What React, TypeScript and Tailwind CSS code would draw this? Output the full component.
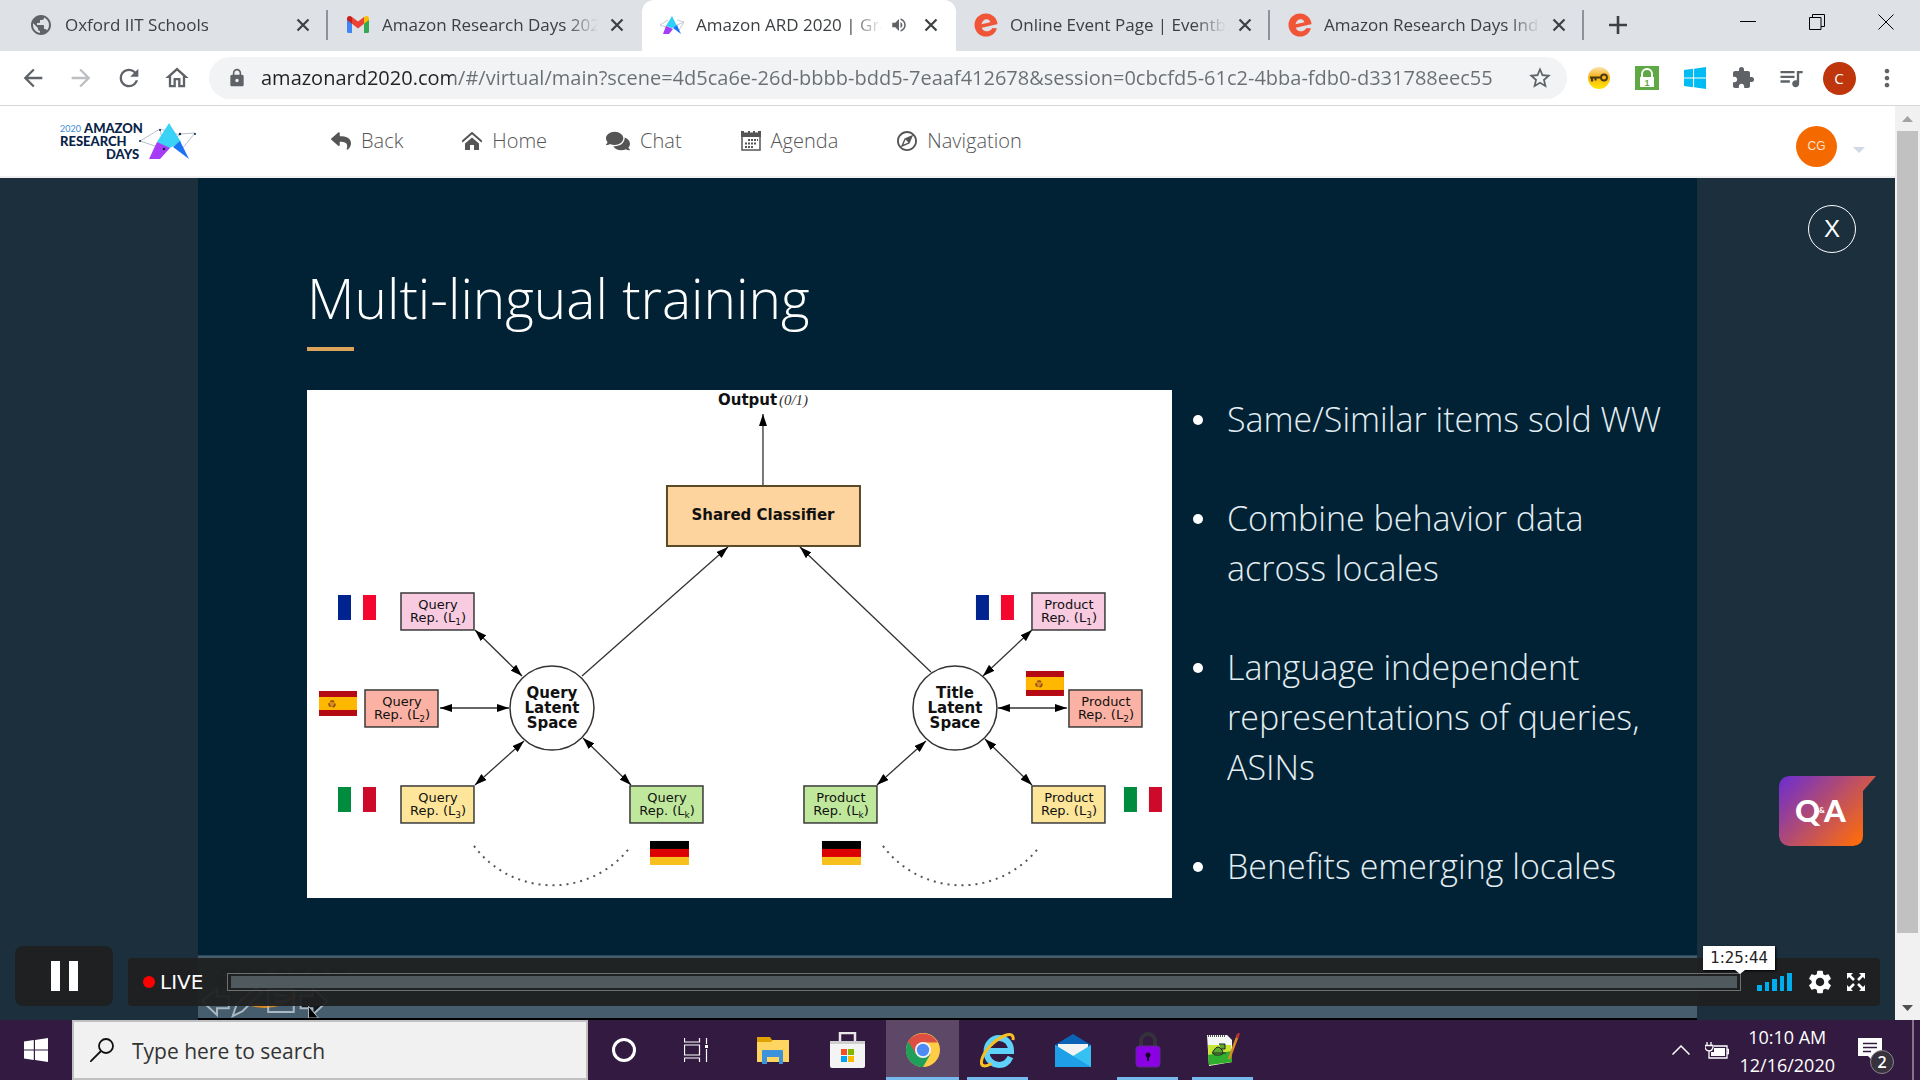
import React from "react";
import {
  MdArrowBack,
  MdArrowForward,
  MdExtension,
  MdLock,
  MdMoreVert,
  MdOutlineHome,
  MdQueueMusic,
  MdRefresh,
  MdSettings,
  MdStarBorder,
  MdVolumeUp,
  MdPublic,
} from "react-icons/md";
import { FaComments, FaReply } from "react-icons/fa";
import { ImCompass2 } from "react-icons/im";

/* ---------- small icons ---------- */

function CloseX() {
  return (
    <svg viewBox="0 0 14 14" className="size-3.5" fill="none" stroke="#3c4043" strokeWidth="2.2">
      <path d="M1.5 1.5l11 11M12.5 1.5l-11 11" />
    </svg>
  );
}

function GmailIcon() {
  return (
    <svg viewBox="0 0 22 17" className="w-[22px] h-[17px]">
      <path d="M0 3v12.5A1.5 1.5 0 0 0 1.500 17H5V6z" fill="#4285f4" />
      <path d="M17 6v11h3.500a1.500 1.500 0 0 0 1.500-1.500V3z" fill="#34a853" />
      <path d="M17 1v6.800l5-3.800V2.500C22 .4 19.700-.6 18 .6z" fill="#fbbc04" />
      <path d="M5 7.800V1l6 4.600L17 1v6.800l-6 4.600z" fill="#ea4335" />
      <path d="M0 2.500V4l5 3.800V1L4 .5C2.300-.6 0 .4 0 2.500z" fill="#c5221f" />
    </svg>
  );
}

function ArdIcon() {
  return (
    <svg viewBox="0 0 24 18" className="w-6 h-[18px]">
      <path d="M0 9l8-5M0 9l9 3M24 6l-7-2M24 6l-5 8M10 12l14-6" stroke="#b9bcc6" strokeWidth=".8" fill="none" />
      <path d="M12 0l-6 10 6 2 5-2z" fill="#2fd0f7" />
      <path d="M6 10L3 18h6l4-5z" fill="#a63cf5" />
      <path d="M17 9l4 9-8-6z" fill="#1a73f5" />
    </svg>
  );
}

function EventbriteIcon() {
  return (
    <svg viewBox="0 0 24 24" className="size-6">
      <ellipse cx="12" cy="12" rx="11.500" ry="11.500" fill="#f05537" />
      <path d="M7.500 11.300C8 8 10.400 6 12.800 6.200c2 .2 3.200 1.500 3.600 3z" fill="#dee1e6" />
      <path d="M7.800 14.700L24 11v4.500l-5.500-.6C16.800 17.800 13.500 18.900 11 18.100 9.300 17.500 8.200 16.300 7.800 14.700z" fill="#dee1e6" />
    </svg>
  );
}

function WindowsLogo({ className }: { className: string }) {
  return (
    <svg viewBox="0 0 24 24" className={className} fill="currentColor">
      <path d="M0 3.400L9.800 2v9.400H0zM11 1.900L24 0v11.400H11zM0 12.600h9.800V22L0 20.600zM11 12.600h13V24l-13-1.900z" />
    </svg>
  );
}

function ArdLogo() {
  return (
    <svg viewBox="0 0 136 38" className="w-[136px] h-[38px]" role="img" aria-label="2020 Amazon Research Days">
      <g fontFamily="Lato, sans-serif" fontWeight="900" fill="#0a2348">
        <text x="0" y="10" fontSize="9" fontWeight="400" fill="#3b8ad8">2020</text>
        <text x="24" y="11" fontSize="13">AMAZON</text>
        <text x="0" y="24" fontSize="13">RESEARCH</text>
        <text x="46" y="37" fontSize="13">DAYS</text>
      </g>
      <g stroke="#9aa3b5" strokeWidth=".7" fill="none">
        <path d="M80 19l20-12M80 19l24 8M100 7l20 6M135 11l-15 1M135 11l-14 17M104 27l16-15M100 7l4 20" />
      </g>
      <path d="M109 1L97 20l11 7 13-7z" fill="#2fd0f7" opacity=".95" />
      <path d="M97 20l-8 17h11l10-11z" fill="#a63cf5" />
      <path d="M120 19l9 18-16-12z" fill="#1a73f5" />
      <g fill="#0a2348">
        <circle cx="80" cy="19" r="1" /><circle cx="100" cy="8" r="1" /><circle cx="104" cy="27" r="1.200" /><circle cx="120" cy="12" r="1.200" /><circle cx="135" cy="12" r="1" />
      </g>
    </svg>
  );
}

/* ---------- browser chrome ---------- */

type TabProps = { title: string; icon: React.ReactNode; active?: boolean; audio?: boolean; sep?: boolean; first?: boolean };

function Tab({ title, icon, active, audio, sep, first }: TabProps) {
  return (
    <div
      role="tab"
      aria-selected={!!active}
      className={
        "flex min-w-0 items-center h-full pb-0.5 " +
        (first ? "w-[328px] pl-[29px] " : "w-[314px] pl-[18px] ") +
        (active ? "bg-white rounded-t-xl" : "")
      }
    >
      <span className="flex w-6 shrink-0 justify-center">{icon}</span>
      <span className="ml-3 flex-1 overflow-hidden whitespace-nowrap text-[17px] leading-6 text-[#3c4043] [mask-image:linear-gradient(90deg,#000_calc(100%-32px),transparent)]">
        {title}
      </span>
      {audio && <MdVolumeUp className="ml-2 size-[18px] shrink-0 text-[#5f6368]" aria-label="Playing audio" />}
      <button aria-label={"Close " + title} className={(audio ? "ml-4" : "ml-3") + " mr-4 shrink-0"}>
        <CloseX />
      </button>
      <span className={"h-[30px] w-0.5 shrink-0 " + (sep ? "bg-[#8f9399]" : "bg-transparent")} />
    </div>
  );
}

function TabStrip() {
  return (
    <div className="flex h-[51px] shrink-0 bg-[#dee1e6]">
      <div role="tablist" className="flex min-w-0">
        <Tab first sep title="Oxford IIT Schools" icon={<MdPublic className="size-[26px] text-[#5f6368]" />} />
        <Tab title="Amazon Research Days 202" icon={<GmailIcon />} />
        <Tab active audio title="Amazon ARD 2020 | Gra" icon={<ArdIcon />} />
        <Tab sep title="Online Event Page | Eventbr" icon={<EventbriteIcon />} />
        <Tab sep title="Amazon Research Days Indi" icon={<EventbriteIcon />} />
      </div>
      <button aria-label="New tab" className="ml-5 w-7 shrink-0 pb-0.5">
        <svg viewBox="0 0 18 18" className="mx-auto size-[18px]" stroke="#3c4043" strokeWidth="2.600">
          <path d="M9 0v18M0 9h18" />
        </svg>
      </button>
      <div className="ml-auto flex shrink-0 pb-2">
        <button aria-label="Minimize" className="w-[69px]">
          <svg viewBox="0 0 16 16" className="mx-auto size-4" stroke="#000"><path d="M0 7.500h16" /></svg>
        </button>
        <button aria-label="Restore" className="w-[69px]">
          <svg viewBox="0 0 16 16" className="mx-auto size-4" fill="none" stroke="#000">
            <path d="M.5 3.500h11.500v12H.5zM3.500 3.500V.5h12v12H12" />
          </svg>
        </button>
        <button aria-label="Close window" className="w-[69px]">
          <svg viewBox="0 0 16 16" className="mx-auto size-4" stroke="#000"><path d="M.5.5l15 15M15.500.5l-15 15" /></svg>
        </button>
      </div>
    </div>
  );
}

const URL_TEXT =
  "amazonard2020.com/#/virtual/main?scene=4d5ca6e-26d-bbbb-bdd5-7eaaf412678&session=0cbcfd5-61c2-4bba-fdb0-d331788eec55";

function AddressBar() {
  const side = "flex w-12 shrink-0 items-center justify-center";
  return (
    <div className="flex h-[55px] shrink-0 items-center border-b border-[#d5d7da] bg-white pl-[9px] pr-[9px] text-[#5f6368]">
      <button aria-label="Back" className={side}><MdArrowBack className="size-7" /></button>
      <button aria-label="Forward" className={side + " text-[#bcbec1]"}><MdArrowForward className="size-7" /></button>
      <button aria-label="Reload" className={side}><MdRefresh className="size-7" /></button>
      <button aria-label="Home" className={side}><MdOutlineHome className="size-7" /></button>
      <div className="ml-2 flex h-[42px] flex-1 items-center rounded-full bg-[#f1f3f4] pl-[18px]">
        <MdLock className="size-5 shrink-0" />
        <input
          aria-label="Address"
          defaultValue={URL_TEXT}
          className="ml-3.5 min-w-0 flex-1 bg-[linear-gradient(90deg,#202124_0_193px,#6a6e73_193px)] bg-clip-text text-[20px] text-transparent outline-none"
        />
        <button aria-label="Bookmark" className="flex w-[54px] shrink-0 justify-center"><MdStarBorder className="size-[26px]" /></button>
      </div>
      <div className="ml-2 flex shrink-0">
        <button aria-label="Password key" className={side}>
          <svg viewBox="0 0 22 22" className="size-[22px]">
            <defs>
              <linearGradient id="keyg" x1="0" y1="0" x2="0" y2="1">
                <stop offset="0" stopColor="#fbe3a8" /><stop offset=".45" stopColor="#f8b219" /><stop offset="1" stopColor="#ffe600" />
              </linearGradient>
            </defs>
            <circle cx="11" cy="11" r="11" fill="url(#keyg)" />
            <circle cx="16" cy="10.500" r="3" fill="none" stroke="#4a3a10" strokeWidth="1.800" />
            <path d="M2 10.500h11M4 10.500v4M7.500 10.500v3" stroke="#4a3a10" strokeWidth="2.200" />
          </svg>
        </button>
        <button aria-label="Secure login" className={side}>
          <svg viewBox="0 0 24 24" className="size-6">
            <path d="M0 0h24v24H0z" fill="#5fa944" />
            <path d="M7 11V8a5 5 0 0 1 10 0v3" fill="none" stroke="#fff" strokeWidth="2" />
            <path d="M5 11h14v10H5z" fill="#fff" />
            <text x="12" y="19.500" fontSize="9" fontWeight="700" textAnchor="middle" fill="#5fa944" fontFamily="Liberation Sans, sans-serif">1</text>
          </svg>
        </button>
        <button aria-label="Windows" className={side}><WindowsLogo className="size-[22px] text-[#00bcf2]" /></button>
        <button aria-label="Extensions" className={side}><MdExtension className="size-6" /></button>
        <button aria-label="Media" className={side}><MdQueueMusic className="size-7" /></button>
        <button aria-label="Profile" className={side}>
          <span className="flex size-[33px] items-center justify-center rounded-full bg-[#bf360c] text-[15px] leading-5 text-white">C</span>
        </button>
        <button aria-label="Menu" className={side}><MdMoreVert className="size-7" /></button>
      </div>
    </div>
  );
}

/* ---------- event site header ---------- */

function HomeIcon() {
  return (
    <svg viewBox="0 0 20 18" className="w-5 h-[18px]" fill="#555">
      <path d="M10 5.500l7 6V18h-5v-5H8v5H3v-6.500z" />
      <path d="M0 9.800L10 1l10 8.800" fill="none" stroke="#555" strokeWidth="2" />
    </svg>
  );
}

function AgendaIcon() {
  return (
    <svg viewBox="0 0 20 20" className="size-5" fill="#555">
      <path d="M0 0h3v1.500h4V0h2v1.500h3V0h2v1.500h3V0h3v6H0z" />
      <path d="M1 5v14h18V5" fill="none" stroke="#555" strokeWidth="1.500" />
      <path d="M7 8h2v2H7zM10 8h2v2h-2zM13 8h2v2h-2zM16 8h1v2h-1zM4 11.500h2v2H4zM7 11.500h2v2H7zM10 11.500h2v2h-2zM13 11.500h2v2h-2zM4 15h2v2H4zM7 15h2v2H7zM10 15h2v2h-2z" />
    </svg>
  );
}

function SiteHeader() {
  const link = "flex items-center gap-2.5";
  return (
    <header className="flex h-[72px] shrink-0 items-center border-b-2 border-[#f0f0f0] bg-white pl-[60px] pr-[30px] text-[#555]">
      <a href="#home" className="shrink-0"><ArdLogo /></a>
      <nav className="ml-[135px] flex gap-[59px] text-[20px] leading-7 font-light">
        <a href="#back" className={link}><FaReply className="size-5" />Back</a>
        <a href="#lobby" className={link}><HomeIcon />Home</a>
        <a href="#chat" className={link}><FaComments className="size-6" />Chat</a>
        <a href="#agenda" className={link}><AgendaIcon />Agenda</a>
        <a href="#navigation" className={link}><ImCompass2 className="size-5" />Navigation</a>
      </nav>
      <button aria-label="Account" className="ml-auto mt-2.5 flex items-center gap-4">
        <span className="flex size-[41px] items-center justify-center rounded-full bg-[#f56a00] font-['Liberation_Sans'] text-[12px] text-[#fde3cf]">CG</span>
        <svg viewBox="0 0 12 6" className="mt-2 w-3 h-1.5"><path d="M0 0h12L6 6z" fill="#d1d8e6" /></svg>
      </button>
    </header>
  );
}

/* ---------- slide ---------- */

type Pt = [number, number];

function Arrow({ from, to, both }: { from: Pt; to: Pt; both?: boolean }) {
  return (
    <line
      x1={from[0]} y1={from[1]} x2={to[0]} y2={to[1]}
      stroke="#333" strokeWidth="1.300" markerEnd="url(#tip)" markerStart={both ? "url(#tip)" : undefined}
    />
  );
}

function Rep({ x, y, label, sub, fill }: { x: number; y: number; label: string; sub: string; fill: string }) {
  return (
    <g>
      <rect x={x} y={y} width="73" height="37" fill={fill} stroke="#3a3a3a" strokeWidth="1.500" />
      <text x={x + 37} y={y + 16} textAnchor="middle" fontSize="13">{label}</text>
      <text x={x + 37} y={y + 29} textAnchor="middle" fontSize="13">
        Rep. (L<tspan fontSize="9" dy="3">{sub}</tspan><tspan dy="-3">)</tspan>
      </text>
    </g>
  );
}

function Latent({ cx, lines }: { cx: number; lines: string[] }) {
  return (
    <g>
      <circle cx={cx} cy="318" r="42" fill="#fff" stroke="#333" strokeWidth="1.500" />
      {lines.map((t, i) => (
        <text key={t} x={cx} y={308 + i * 15} textAnchor="middle" fontSize="15" fontWeight="700">{t}</text>
      ))}
    </g>
  );
}

function TwoBars({ x, y, a, b }: { x: number; y: number; a: string; b: string }) {
  return (
    <g>
      <rect x={x} y={y} width="13" height="25" fill={a} />
      <rect x={x + 25} y={y} width="13" height="25" fill={b} />
    </g>
  );
}

function Spain({ x, y }: { x: number; y: number }) {
  return (
    <g>
      <rect x={x} y={y} width="38" height="25" fill="#b50a14" />
      <rect x={x} y={y + 6} width="38" height="13" fill="#ffb700" />
      <circle cx={x + 13} cy={y + 13} r="3" fill="#d98c1c" stroke="#8a4b14" strokeWidth="1.500" strokeDasharray="4 2" />
    </g>
  );
}

function Germany({ x, y }: { x: number; y: number }) {
  return (
    <g>
      <rect x={x} y={y} width="39" height="8" fill="#000" />
      <rect x={x} y={y + 8} width="39" height="8" fill="#dd0000" />
      <rect x={x} y={y + 16} width="39" height="8" fill="#f8c01c" />
    </g>
  );
}

function Diagram() {
  return (
    <svg viewBox="0 0 865 508" className="w-full bg-white" fontFamily="DejaVu Sans, sans-serif" fill="#111" role="img" aria-label="Shared classifier diagram">
      <defs>
        <marker id="tip" viewBox="0 0 12 8" refX="12" refY="4" markerWidth="12" markerHeight="8" markerUnits="userSpaceOnUse" orient="auto-start-reverse">
          <path d="M0 0l12 4-12 4z" fill="#000" />
        </marker>
      </defs>
      <text x="411" y="15" fontSize="15" fontWeight="700">Output</text>
      <text x="472" y="15" fontSize="15" fontStyle="italic" fontFamily="Liberation Serif, serif" fill="#333">(0/1)</text>
      <Arrow from={[456, 96]} to={[456, 24]} />
      <rect x="360" y="96" width="193" height="60" fill="#fdd49e" stroke="#5a4a2a" strokeWidth="2" />
      <text x="456" y="130" fontSize="15" fontWeight="700" textAnchor="middle">Shared Classifier</text>
      <Arrow from={[275, 286]} to={[421, 157]} />
      <Arrow from={[624, 282]} to={[493, 157]} />

      <Latent cx={245} lines={["Query", "Latent", "Space"]} />
      <Arrow both from={[168, 240]} to={[215, 286]} />
      <Arrow both from={[133, 318]} to={[202, 318]} />
      <Arrow both from={[168, 395]} to={[217, 351]} />
      <Arrow both from={[276, 348]} to={[324, 395]} />
      <Rep x={94} y={203} label="Query" sub="1" fill="#f8cbe0" />
      <Rep x={58} y={300} label="Query" sub="2" fill="#fbb1a3" />
      <Rep x={94} y={396} label="Query" sub="3" fill="#fde69a" />
      <Rep x={323} y={396} label="Query" sub="k" fill="#c0e89c" />
      <TwoBars x={31} y={205} a="#00248f" b="#f5062e" />
      <Spain x={12} y={301} />
      <TwoBars x={31} y={397} a="#008c3e" b="#ce0a2a" />
      <Germany x={343} y={451} />

      <Latent cx={648} lines={["Title", "Latent", "Space"]} />
      <Arrow both from={[725, 240]} to={[676, 286]} />
      <Arrow both from={[691, 318]} to={[760, 318]} />
      <Arrow both from={[678, 349]} to={[725, 395]} />
      <Arrow both from={[570, 395]} to={[619, 351]} />
      <Rep x={725} y={203} label="Product" sub="1" fill="#f8cbe0" />
      <Rep x={762} y={300} label="Product" sub="2" fill="#fbb1a3" />
      <Rep x={725} y={396} label="Product" sub="3" fill="#fde69a" />
      <Rep x={497} y={396} label="Product" sub="k" fill="#c0e89c" />
      <TwoBars x={669} y={205} a="#00248f" b="#f5062e" />
      <Spain x={719} y={281} />
      <TwoBars x={817} y={397} a="#008c3e" b="#ce0a2a" />
      <Germany x={515} y={451} />

      <g fill="none" stroke="#555" strokeWidth="2" strokeDasharray="2 5">
        <path d="M167 456A98 98 0 0 0 324 456" />
        <path d="M576 456A98 98 0 0 0 733 456" />
      </g>
    </svg>
  );
}

const POINTS = [
  ["Same/Similar items sold WW"],
  ["Combine behavior data", "across locales"],
  ["Language independent", "representations of queries,", "ASINs"],
  ["Benefits emerging locales"],
];

function Slide() {
  return (
    <section className="relative flex w-[79.1%] flex-col bg-[#002234] pl-[109px] pt-[90px] text-white">
      <h1 className="text-[55px] leading-[60px] font-light">Multi-lingual training</h1>
      <div className="mt-[19px] h-1 w-[47px] bg-[#dba45a]" />
      <div className="mt-[39px] grid grid-cols-[865fr_504fr] items-start gap-[21px]">
        <Diagram />
        <ul className="pt-1 text-[34px] leading-[50px] font-light text-[#e3edf2]">
          {POINTS.map((lines) => (
            <li key={lines[0]} className="mb-[49px] flex">
              <span className="mt-[21px] mr-6 size-2.5 shrink-0 rounded-full bg-white" />
              <span className="whitespace-nowrap">
                {lines.map((l) => (
                  <span key={l} className="block">{l}</span>
                ))}
              </span>
            </li>
          ))}
        </ul>
      </div>
      <div className="absolute inset-x-0 bottom-0 h-[65px] border-t border-b-2 border-t-[#2d4658] border-b-black bg-[#455d6d]">
        <svg viewBox="0 0 160 63" className="h-[62px] w-40" fill="none" stroke="#a9b8c2" strokeWidth="2">
          <text x="18" y="32" fontSize="34" fontWeight="700" fill="#1c2a35" stroke="none" fontFamily="Open Sans, sans-serif">amazon</text>
          <path d="M42 43c12 10 38 12 56-4" stroke="#d98a1c" strokeWidth="4" />
          <path d="M3 46l15-13v8h12v12H18v7z" />
          <path d="M34 61l4-12 20-17 5 5-19 19z" fill="#3c4f5c" />
          <path d="M70 34h26v23H70zM76 40h14M76 46h14" />
          <path d="M130 46l-15-13v8h-12v12h12v7z" fill="#10181e" />
          <path d="M111 51v12h10z" fill="#000" strokeWidth="1" />
        </svg>
      </div>
    </section>
  );
}

/* ---------- player controls ---------- */

function PlayerControls() {
  return (
    <div className="absolute inset-x-[15px] bottom-3.5 flex items-end gap-[15px]">
      <button aria-label="Pause" className="flex h-[60px] w-[98px] shrink-0 items-center justify-center gap-[9px] rounded-lg bg-[#1f2021]/95">
        <span className="h-[30px] w-[9px] bg-white" />
        <span className="h-[30px] w-[9px] bg-white" />
      </button>
      <div className="flex h-12 flex-1 items-center rounded bg-[#1f2021]/95 pl-[15px] pr-[15px]">
        <span className="size-3 rounded-full bg-[#ff0000]" />
        <span className="ml-[5px] font-['DejaVu_Sans'] text-[20px] leading-6 text-white">LIVE</span>
        <div className="relative ml-6 flex flex-1">
          <input
            type="range"
            aria-label="Seek"
            defaultValue={100}
            className="h-[18px] w-full appearance-none border border-[#6c6f70] bg-[#505a5e] bg-clip-content px-[3px] py-0.5 [&::-webkit-slider-thumb]:w-0 [&::-webkit-slider-thumb]:appearance-none"
          />
          <div className="absolute -right-[34px] bottom-[21px] bg-white px-[7px] text-[#222] shadow-[1px_1px_2px_#000]">
            <span className="block font-['DejaVu_Sans'] text-[15px] leading-6">1:25:44</span>
            <svg viewBox="0 0 10 4" className="absolute left-8 top-full w-2.5 h-1"><path d="M0 0h10L5 4z" fill="#fff" /></svg>
          </div>
        </div>
        <button aria-label="Volume" className="ml-4 flex h-[18px] items-end gap-[3px]">
          <span className="h-1.5 w-[5px] bg-[#00adef]" />
          <span className="h-[9px] w-[4px] bg-[#00adef]" />
          <span className="h-3 w-[5px] bg-[#00adef]" />
          <span className="h-[15px] w-[4px] bg-[#00adef]" />
          <span className="h-[18px] w-[5px] bg-[#00adef]" />
        </button>
        <button aria-label="Settings" className="ml-3.5"><MdSettings className="size-7 text-white" /></button>
        <button aria-label="Full screen" className="ml-[13px]">
          <svg viewBox="0 0 18 18" className="size-[18px]" fill="#fff" stroke="#fff" strokeWidth="2.500">
            <path d="M2 2l5 5M16 2l-5 5M2 16l5-5M16 16l-5-5" />
            <path d="M0 0h6L0 6zM18 0v6l-6-6zM0 18v-6l6 6zM18 18h-6l6-6z" stroke="none" />
          </svg>
        </button>
      </div>
    </div>
  );
}

function Stage() {
  return (
    <main className="relative flex min-h-0 flex-1 justify-center bg-[#1c2f3d]">
      <Slide />
      <button aria-label="Close session" className="absolute right-[39px] top-[27px] flex size-12 items-center justify-center rounded-full border border-white text-white">
        <span className="font-['Liberation_Sans'] text-[24px] leading-none">X</span>
      </button>
      <button aria-label="Questions and answers" className="absolute bottom-[174px] right-[19px]">
        <svg viewBox="0 0 97 70" className="h-[70px] w-[97px]">
          <defs>
            <linearGradient id="qa" gradientUnits="userSpaceOnUse" x1="8" y1="0" x2="80" y2="68">
              <stop offset="0" stopColor="#7230c8" /><stop offset="1" stopColor="#ff6c0a" />
            </linearGradient>
          </defs>
          <path d="M10 0h87L84 15v45q0 9-10 10H10q-9-1-10-10V10Q1 1 10 0z" fill="url(#qa)" />
          <g fontFamily="Lato, sans-serif" fontWeight="900" fill="#fff">
            <text x="16" y="46" fontSize="31">Q</text>
            <text x="40" y="37" fontSize="8">&amp;</text>
            <text x="45" y="46" fontSize="31">A</text>
          </g>
        </svg>
      </button>
      <PlayerControls />
    </main>
  );
}

function Scrollbar() {
  return (
    <div className="flex w-[25px] shrink-0 flex-col items-center bg-[#f1f1f1]">
      <svg viewBox="0 0 25 25" className="size-[25px] shrink-0"><path d="M7 16h11l-5.500-6z" fill="#a3a3a3" /></svg>
      <div className="w-[21px] flex-[802] bg-[#c1c1c1]" />
      <div className="flex-[62]" />
      <svg viewBox="0 0 25 25" className="size-[25px] shrink-0"><path d="M7 10h11l-5.500 6z" fill="#505050" /></svg>
    </div>
  );
}

/* ---------- taskbar ---------- */

function ExplorerIcon() {
  return (
    <svg viewBox="0 0 32 27" className="w-8 h-[27px]">
      <path d="M0 0h13l2 3h17v22H0z" fill="#e0a200" />
      <path d="M0 5h14l2-2h16v22H0z" fill="#ffd461" />
      <path d="M5 14q0-1 1-1h19q1 0 1 1v13h-4v-7H10v7H5z" fill="#3d92dc" />
    </svg>
  );
}

function StoreIcon() {
  return (
    <svg viewBox="0 0 35 36" className="w-[35px] h-9">
      <path d="M10 10V1h15v9" fill="none" stroke="#e8e8e8" strokeWidth="2.500" />
      <path d="M0 9h35v25q0 2-2 2H2q-2 0-2-2z" fill="#f4f4f4" />
      <path d="M0 9h35v3H0z" fill="#cfcfcf" />
      <path d="M11 17h6v6h-6z" fill="#f25022" /><path d="M18 17h6v6h-6z" fill="#7fba00" />
      <path d="M11 24h6v6h-6z" fill="#00a4ef" /><path d="M18 24h6v6h-6z" fill="#ffb900" />
    </svg>
  );
}

function ChromeIcon() {
  return (
    <svg viewBox="0 0 34 34" className="size-[34px]">
      <circle cx="17" cy="17" r="17" fill="#ffcd46" />
      <path d="M17 17L2.300 8.500A17 17 0 0 0 17 34l7.400-12.700z" fill="#1ea05a" />
      <path d="M17 9.500h14.700A17 17 0 0 0 2.300 8.500L10 21z" fill="#dd4f43" />
      <circle cx="17" cy="17" r="8" fill="#f4f4f4" />
      <circle cx="17" cy="17" r="6.200" fill="#4c8bf5" />
    </svg>
  );
}

function IeIcon() {
  return (
    <svg viewBox="0 0 36 36" className="size-9" fill="none">
      <path d="M6 19h25C31 11 26 6 19 6S6.500 12 6.500 19.500 12 33 19 33c5 0 9-2.500 11.500-8" stroke="#5fd2fa" strokeWidth="6" />
      <path d="M33 8C34 3 31 1 25 3.500 14 8 3 20 1.500 29c-.8 6 4 6 10 2.500" stroke="#f6bf26" strokeWidth="3" />
    </svg>
  );
}

function MailIcon() {
  return (
    <svg viewBox="0 0 36 33" className="w-9 h-[33px]">
      <path d="M0 11L18 0l18 11v3H0z" fill="#0a63b5" />
      <path d="M3 10h30v10L18 27 3 18z" fill="#f3f3f3" />
      <path d="M0 11l18 11L36 11v22H0z" fill="#35c1f1" />
      <path d="M0 33V11l36 22z" fill="#1f9fe8" />
    </svg>
  );
}

function PadlockIcon() {
  return (
    <svg viewBox="0 0 26 36" className="w-[26px] h-9">
      <path d="M6 15V9a7 7 0 0 1 14 0v6" fill="none" stroke="#35323b" strokeWidth="4" />
      <rect x="1" y="14" width="24" height="21" rx="3" fill="#8c00e6" stroke="#5b2a86" />
      <circle cx="13" cy="23" r="2.500" fill="#150022" /><path d="M12 24h2v5h-2z" fill="#150022" />
    </svg>
  );
}

function NotepadIcon() {
  return (
    <svg viewBox="0 0 34 34" className="size-[34px]">
      <path d="M1 2h20l5 5v22L3 33z" fill="#f4f8f4" />
      <path d="M2 12h23l1 17-23 3z" fill="#c8e632" />
      <path d="M2 22l24-4v11L3 32z" fill="#2fae2f" />
      <path d="M2 3h18" stroke="#555" strokeWidth="2" strokeDasharray="1 1" />
      <path d="M8 17q4-6 8 0t-7 5q-4-2-1-5zM13 11h6v5h-4M6 20h14" fill="#5aa832" stroke="#222" />
      <path d="M32 2L23 26" stroke="#d98a20" strokeWidth="2.500" /><path d="M33 0l-2 5" stroke="#b03030" strokeWidth="2.500" />
    </svg>
  );
}

const APPS = [
  { name: "File Explorer", icon: <ExplorerIcon />, state: "idle" },
  { name: "Microsoft Store", icon: <StoreIcon />, state: "idle" },
  { name: "Google Chrome", icon: <ChromeIcon />, state: "active" },
  { name: "Internet Explorer", icon: <IeIcon />, state: "open" },
  { name: "Mail", icon: <MailIcon />, state: "idle" },
  { name: "Password Safe", icon: <PadlockIcon />, state: "open" },
  { name: "Notepad++", icon: <NotepadIcon />, state: "open" },
];

function Taskbar() {
  return (
    <footer className="flex h-[60px] shrink-0 bg-[#331a40] text-white">
      <button aria-label="Start" className="flex w-[72px] shrink-0 items-center justify-center"><WindowsLogo className="size-6" /></button>
      <label className="flex w-[516px] items-center border-2 border-[#c0bfc1] bg-[#f1f1f1] pl-4">
        <svg viewBox="0 0 24 24" className="size-6 shrink-0" fill="none" stroke="#111" strokeWidth="1.800">
          <circle cx="16" cy="8" r="7" /><path d="M11 13L0 24" />
        </svg>
        <input aria-label="Search" placeholder="Type here to search" className="ml-[18px] min-w-0 flex-1 pt-1 text-[21px] text-[#222] outline-none placeholder:text-[#333]" />
      </label>
      <button aria-label="Cortana" className="flex w-[72px] shrink-0 items-center justify-center">
        <span className="size-6 rounded-full border-3 border-white" />
      </button>
      <button aria-label="Task View" className="flex w-[72px] shrink-0 items-center justify-center">
        <svg viewBox="0 0 24 24" className="size-6" fill="none" stroke="#fff" strokeWidth="1.200">
          <path d="M.5 0v4h15V0M.5 24v-4h15v4M.5 7h15v10H.5zM22.500 0v6M22.500 11v13" /><path d="M21 7h3v3h-3z" fill="#fff" stroke="none" />
        </svg>
      </button>
      <div className="ml-1 flex gap-0.5">
        {APPS.map((a) => (
          <button
            key={a.name}
            aria-label={a.name}
            className={"relative flex w-[73px] items-center justify-center " + (a.state === "active" ? "bg-[#5d4868]" : "")}
          >
            {a.icon}
            {a.state === "active" && <span className="absolute inset-x-0 bottom-0 h-[3px] bg-[#76b9ed]" />}
            {a.state === "open" && <span className="absolute inset-x-1.5 bottom-0 h-[3px] bg-[#76b9ed]" />}
          </button>
        ))}
      </div>
      <div className="ml-auto flex items-center">
        <button aria-label="Show hidden icons">
          <svg viewBox="0 0 18 10" className="w-[18px] h-2.5" fill="none" stroke="#fff" strokeWidth="1.500"><path d="M.5 9.500L9 1l8.500 8.500" /></svg>
        </button>
        <svg viewBox="0 0 24 17" className="ml-[15px] w-6 h-[17px]" fill="none" stroke="#fff" strokeWidth="1.300">
          <path d="M9 4h13v12H4V9M22 7.500h1.500v4H22M2 0v4M6 0v4M0 3.500h8v2Q7 9 4 9 1 9 0 5.500z" /><path d="M9 6h11v8H6v-4h3z" fill="#fff" stroke="none" />
        </svg>
        <div className="ml-2.5 pt-0.5 text-center text-[18px] leading-7">
          <div>10:10 AM</div>
          <div>12/16/2020</div>
        </div>
        <button aria-label="Notifications" className="relative ml-[23px]">
          <svg viewBox="0 0 24 24" className="size-6">
            <path d="M0 0h24v18h-8v6l-6-6H0z" fill="#fff" /><path d="M5 5.500h14M5 9.500h14M5 13.500h8" stroke="#331a40" strokeWidth="1.300" />
          </svg>
          <span className="absolute -bottom-3 -right-3 flex size-6 items-center justify-center rounded-full border border-[#8a8590] bg-[#37323c] text-[16px] leading-none font-semibold">2</span>
        </button>
        <span className="ml-[30px] mr-1.5 h-[60px] w-0.5 bg-[#85758c]" />
      </div>
    </footer>
  );
}

export default function App() {
  return (
    <div className="flex h-screen flex-col overflow-hidden bg-white font-['Open_Sans',sans-serif]">
      <TabStrip />
      <AddressBar />
      <div className="flex min-h-0 flex-1">
        <div className="flex min-w-0 flex-1 flex-col">
          <SiteHeader />
          <Stage />
        </div>
        <Scrollbar />
      </div>
      <Taskbar />
    </div>
  );
}
